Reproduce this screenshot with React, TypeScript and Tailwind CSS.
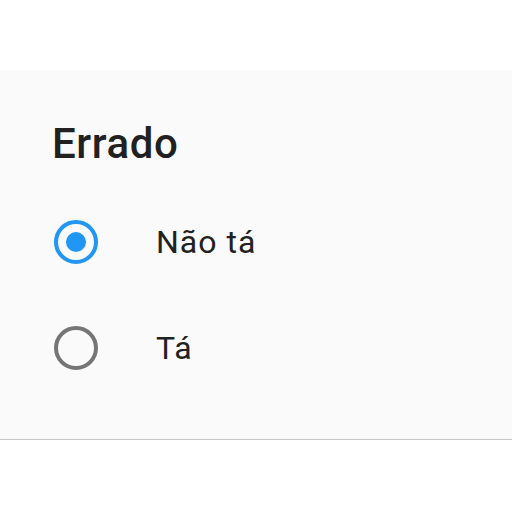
import React, { useState } from 'react';

const options = ['Não tá', 'Tá'];

function Radio({ checked }: { checked: boolean }) {
  return (
    <span
      className={`flex h-[44px] w-[44px] shrink-0 items-center justify-center rounded-full border-[4px] ${
        checked ? 'border-[#2196f3]' : 'border-[#757575]'
      }`}
    >
      {checked && <span className="h-[20px] w-[20px] rounded-full bg-[#2196f3]" />}
    </span>
  );
}

export default function App() {
  const [value, setValue] = useState('Não tá');

  return (
    <div className="min-h-screen bg-white pt-[70px]" style={{ fontFamily: 'Roboto, "Noto Sans", sans-serif' }}>
      <div className="h-[370px] border-b border-[#c8c8c8] bg-[#fafafa] pl-[54px]">
        <h2 className="pt-[53px] -ml-[2px] text-[42px] font-medium leading-none tracking-[0.6px] text-[#212121]">
          Errado
        </h2>
        <div className="mt-[55px] flex flex-col gap-[62px]">
          {options.map((opt) => (
            <label key={opt} className="flex cursor-pointer items-center" onClick={() => setValue(opt)}>
              <Radio checked={value === opt} />
              <span className="ml-[58px] text-[32px] leading-none tracking-[1px] text-[#212121]">{opt}</span>
            </label>
          ))}
        </div>
      </div>
    </div>
  );
}
